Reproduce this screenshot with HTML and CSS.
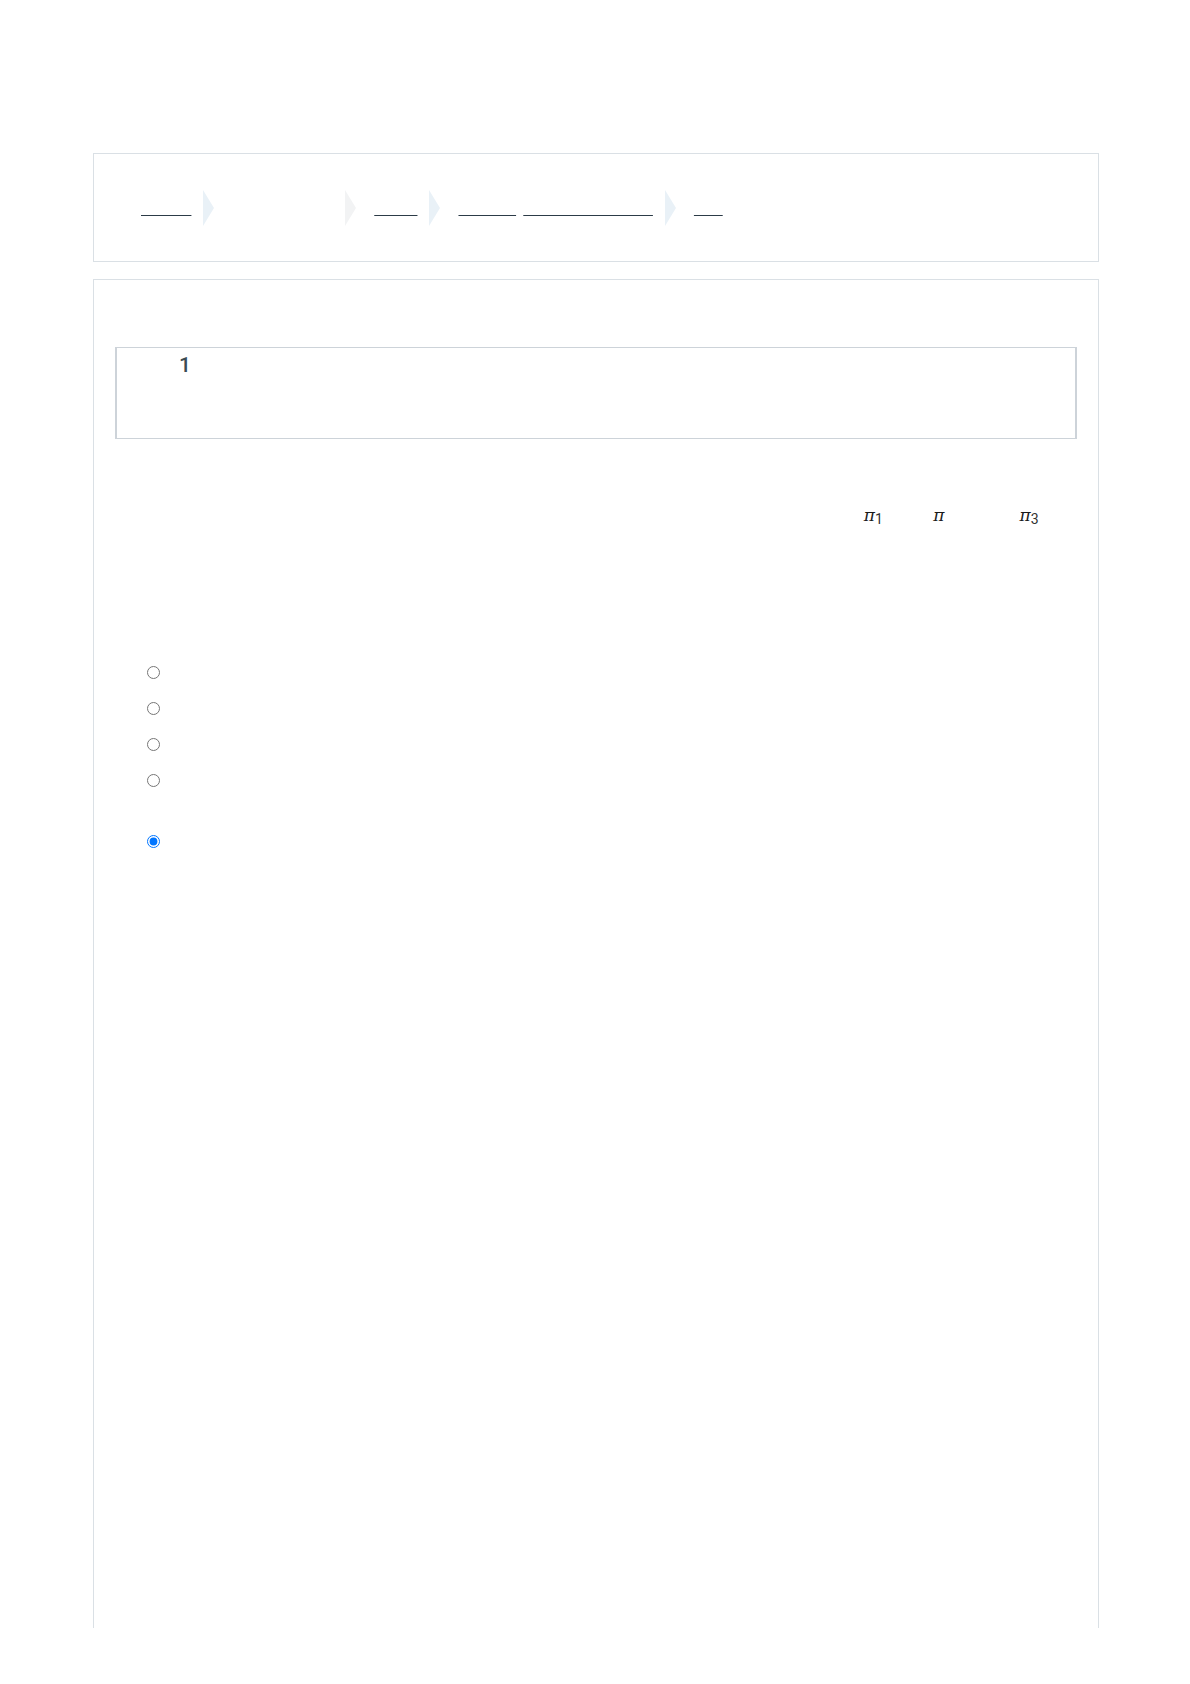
FILE: index.html
```html
<!DOCTYPE html>
<html lang="en">
<head>
  <meta charset="UTF-8">
  <meta name="viewport" content="width=device-width, initial-scale=1.0">
  <title>Markov Chains Test</title>
  <link rel="stylesheet" href="styles.css">
</head>
<body>
  <div class="page">
    <nav class="card crumbs">
      <a href="#">Courses</a><span class="sep"></span>
      <span class="crumb-plain">Mathematics II</span><span class="sep sep-grey"></span>
      <a href="#">MAT202</a><span class="sep"></span>
      <span class="crumb-pair"><a href="#">Topic 05</a> <a href="#">Markov Chains Test</a></span><span class="sep"></span>
      <a href="#">Quiz</a>
    </nav>

    <main class="card quiz">
      <h2 class="quiz-title">Markov Chains Test</h2>

      <div class="que">
        <div class="info">
          <h3 class="qno"><span class="qlabel">Question</span> <span class="num">1</span></h3>
          <div class="state">Not yet answered</div>
          <div class="grade">Marked out of 1.00</div>
        </div>

        <div class="formulation">
          <p class="qtext">A Markov chain with three states has the stationary distribution given by the row vector <span class="math">π<sub>1</sub></span>, and <span class="math">π<sub class="hide">2</sub></span> or the <span class="math">π<sub>3</sub></span>.</p>

          <div class="prompt">Select one:</div>
          <div class="answers">
            <label class="answer"><input type="radio" name="q1"><span>a. 0.25, 0.50, 0.25</span></label>
            <label class="answer"><input type="radio" name="q1"><span>b. 0.20, 0.40, 0.40</span></label>
            <label class="answer"><input type="radio" name="q1"><span>c. 0.30, 0.30, 0.40</span></label>
            <label class="answer"><input type="radio" name="q1"><span>d. 0.10, 0.60, 0.30</span></label>
            <label class="answer answer-clear"><input type="radio" name="q1" checked><span>Clear my choice</span></label>
          </div>
        </div>
      </div>
    </main>
  </div>
</body>
</html>
```

FILE: styles.css
```css
body {
  margin: 0;
  font-family: "Liberation Sans", Arial, sans-serif;
  background: #fff;
}
.page {
  width: 1006px;
  margin: 153px 0 0 93px;
}
.card {
  box-sizing: border-box;
  border: 1px solid #dae0e5;
  background: #fff;
}

/* breadcrumb */
.crumbs {
  height: 109px;
  display: flex;
  align-items: center;
  padding-left: 47px;
  font-family: "Liberation Mono", monospace;
  font-size: 12px;
  line-height: 16px;
  color: transparent;
}
.crumbs a {
  color: transparent;
  text-decoration: underline;
  text-decoration-color: #2c3b47;
  text-decoration-thickness: 1px;
  text-underline-offset: 4px;
}
.crumb-pair,
.crumb-plain {
  white-space: pre;
}
.sep {
  flex: none;
  width: 0;
  height: 0;
  border-top: 18px solid transparent;
  border-bottom: 18px solid transparent;
  border-left: 11px solid #e9f1f7;
  margin: 0 18px 0 12px;
}
.sep-grey {
  border-left-color: #f2f3f4;
}

/* quiz card */
.quiz {
  margin-top: 17px;
  height: 1349px;
  border-bottom: 0;
  padding: 20px 21px 0;
}
.quiz-title {
  margin: 0 0 20px;
  font-size: 22px;
  line-height: 27px;
  color: transparent;
}
.info {
  box-sizing: border-box;
  height: 92px;
  padding: 5px 9px;
  border: 1px solid #cdd3d9;
  border-left-width: 2px;
  border-right-width: 2px;
  color: transparent;
  font-size: 13px;
  line-height: 18px;
}
.qno {
  margin: 0;
  font-family: Roboto, sans-serif;
  font-size: 21px;
  line-height: 24px;
  font-weight: 500;
}
.qlabel {
  font-size: 12px;
  font-weight: normal;
}
.num {
  color: #3a4b53;
}

.formulation {
  margin-top: 63px;
}
.qtext {
  margin: 0;
  padding-left: 1px;
  font-family: "Liberation Mono", monospace;
  font-size: 14px;
  line-height: 30px;
  white-space: nowrap;
  color: transparent;
}
.math {
  font-family: "DejaVu Serif", serif;
  font-style: italic;
  font-size: 17px;
  line-height: 24px;
  color: #1a1a1a;
}
.math sub {
  font-family: Roboto, sans-serif;
  font-style: normal;
  font-size: 14px;
  line-height: 0;
  vertical-align: -2.5px;
  color: #333;
}
.math sub.hide {
  color: transparent;
}
.prompt {
  margin: 75px 0 23px;
  line-height: 24px;
  color: transparent;
}
.answer {
  display: flex;
  align-items: center;
  height: 36px;
  padding-left: 32px;
  color: transparent;
  font-size: 15px;
}
.answer input {
  margin: 0;
}
.answer span {
  margin-left: 8px;
}
.answer-clear {
  margin-top: 25px;
}
```
